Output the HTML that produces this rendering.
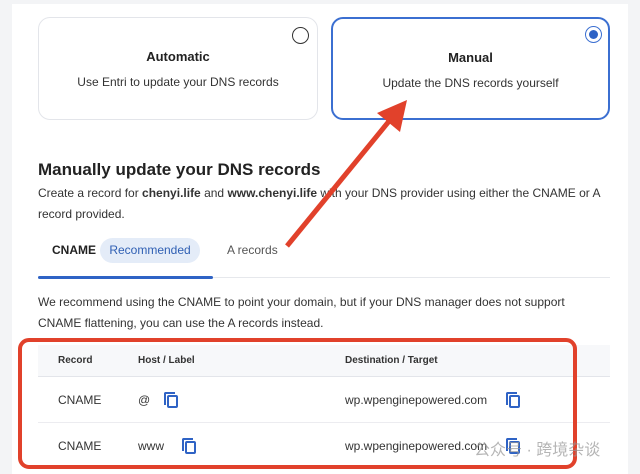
<!DOCTYPE html>
<html><head><meta charset="utf-8"><style>
*{box-sizing:border-box;margin:0;padding:0}
body{width:640px;height:474px;background:#f3f4f6;font-family:"Liberation Sans","Noto Sans CJK SC",sans-serif;color:#222;position:relative;overflow:hidden}
.panel{position:absolute;left:12px;top:4px;width:616px;height:470px;background:#fff}
.a{position:absolute;white-space:nowrap}
.card{position:absolute;top:17px;height:103px;border:1px solid #e3e5ea;border-radius:12px;background:#fff}
.card b{position:absolute;top:31px;left:0;right:0;text-align:center;font-size:13px}
.card span{position:absolute;top:57px;left:0;right:0;text-align:center;font-size:12px;color:#333}
.cp{position:absolute;width:11px;height:13px;border:2px solid #2f63c5;border-radius:2px;background:#fff}
.cp:before{content:"";position:absolute;left:-5px;top:-5px;width:9px;height:11px;border-left:2px solid #2f63c5;border-top:2px solid #2f63c5;border-radius:2px 0 0 0}
</style></head><body>
<div class="panel"></div>
<div class="card" style="left:38px;width:280px"><b>Automatic</b><span>Use Entri to update your DNS records</span></div>
<div class="a" style="left:292px;top:27px;width:17px;height:17px;border:1.5px solid #333;border-radius:50%"></div>
<div class="card" style="left:331px;width:279px;border:2px solid #3b6fd1"><b>Manual</b><span>Update the DNS records yourself</span></div>
<div class="a" style="left:585px;top:26px;width:17px;height:17px;border:1.5px solid #3b6fd1;border-radius:50%"></div>
<div class="a" style="left:589px;top:30px;width:9px;height:9px;background:#2f63c5;border-radius:50%"></div>
<div class="a" style="left:38px;top:160px;font-size:17px;font-weight:bold;color:#222">Manually update your DNS records</div>
<div class="a" style="left:38px;top:183px;font-size:12px;line-height:21px;color:#333">Create a record for <b>chenyi.life</b> and <b>www.chenyi.life</b> with your DNS provider using either the CNAME or A<br>record provided.</div>
<div class="a" style="left:52px;top:243px;font-size:12px;font-weight:bold">CNAME</div>
<div class="a" style="left:100px;top:238px;width:100px;height:25px;border-radius:13px;background:#e4ecf8;color:#2f5fb3;font-size:12px;line-height:25px;text-align:center">Recommended</div>
<div class="a" style="left:227px;top:243px;font-size:12px;color:#555">A records</div>
<div class="a" style="left:38px;top:277px;width:572px;height:1px;background:#e6e8ec"></div>
<div class="a" style="left:38px;top:276px;width:175px;height:3px;background:#2f63c5;border-radius:2px"></div>
<div class="a" style="left:38px;top:292px;font-size:12px;line-height:21px;color:#333">We recommend using the CNAME to point your domain, but if your DNS manager does not support<br>CNAME flattening, you can use the A records instead.</div>
<div class="a" style="left:38px;top:345px;width:572px;height:32px;background:#f7f8fa;border-bottom:1px solid #e3e5ea"></div>
<div class="a" style="left:38px;top:422px;width:572px;height:1px;background:#ececf0"></div>
<div class="a" style="left:58px;top:355px;font-size:10px;font-weight:bold;color:#333">Record</div>
<div class="a" style="left:138px;top:355px;font-size:10px;font-weight:bold;color:#333">Host / Label</div>
<div class="a" style="left:345px;top:355px;font-size:10px;font-weight:bold;color:#333">Destination / Target</div>
<div class="a" style="left:58px;top:393px;font-size:12px;color:#333">CNAME</div>
<div class="a" style="left:138px;top:393px;font-size:12px;color:#333">@</div>
<div class="cp" style="left:167px;top:395px"></div>
<div class="a" style="left:345px;top:393px;font-size:12px;color:#333">wp.wpenginepowered.com</div>
<div class="cp" style="left:509px;top:395px"></div>
<div class="a" style="left:58px;top:439px;font-size:12px;color:#333">CNAME</div>
<div class="a" style="left:138px;top:439px;font-size:12px;color:#333">www</div>
<div class="cp" style="left:185px;top:441px"></div>
<div class="a" style="left:345px;top:439px;font-size:12px;color:#333">wp.wpenginepowered.com</div>
<div class="cp" style="left:509px;top:441px"></div>
<div class="a" style="left:18px;top:338px;width:559px;height:131px;border:4px solid #e1412b;border-radius:11px"></div>
<div class="a" style="left:474px;top:436px;font-size:16px;color:rgba(150,150,150,.7)">公众号 · 跨境杂谈</div>
<svg class="a" style="left:0;top:0" width="640" height="474"><line x1="287" y1="246" x2="390" y2="120" stroke="#e1412b" stroke-width="5"/><polygon points="407,100 377,113 400,132" fill="#e1412b"/></svg>
</body></html>
